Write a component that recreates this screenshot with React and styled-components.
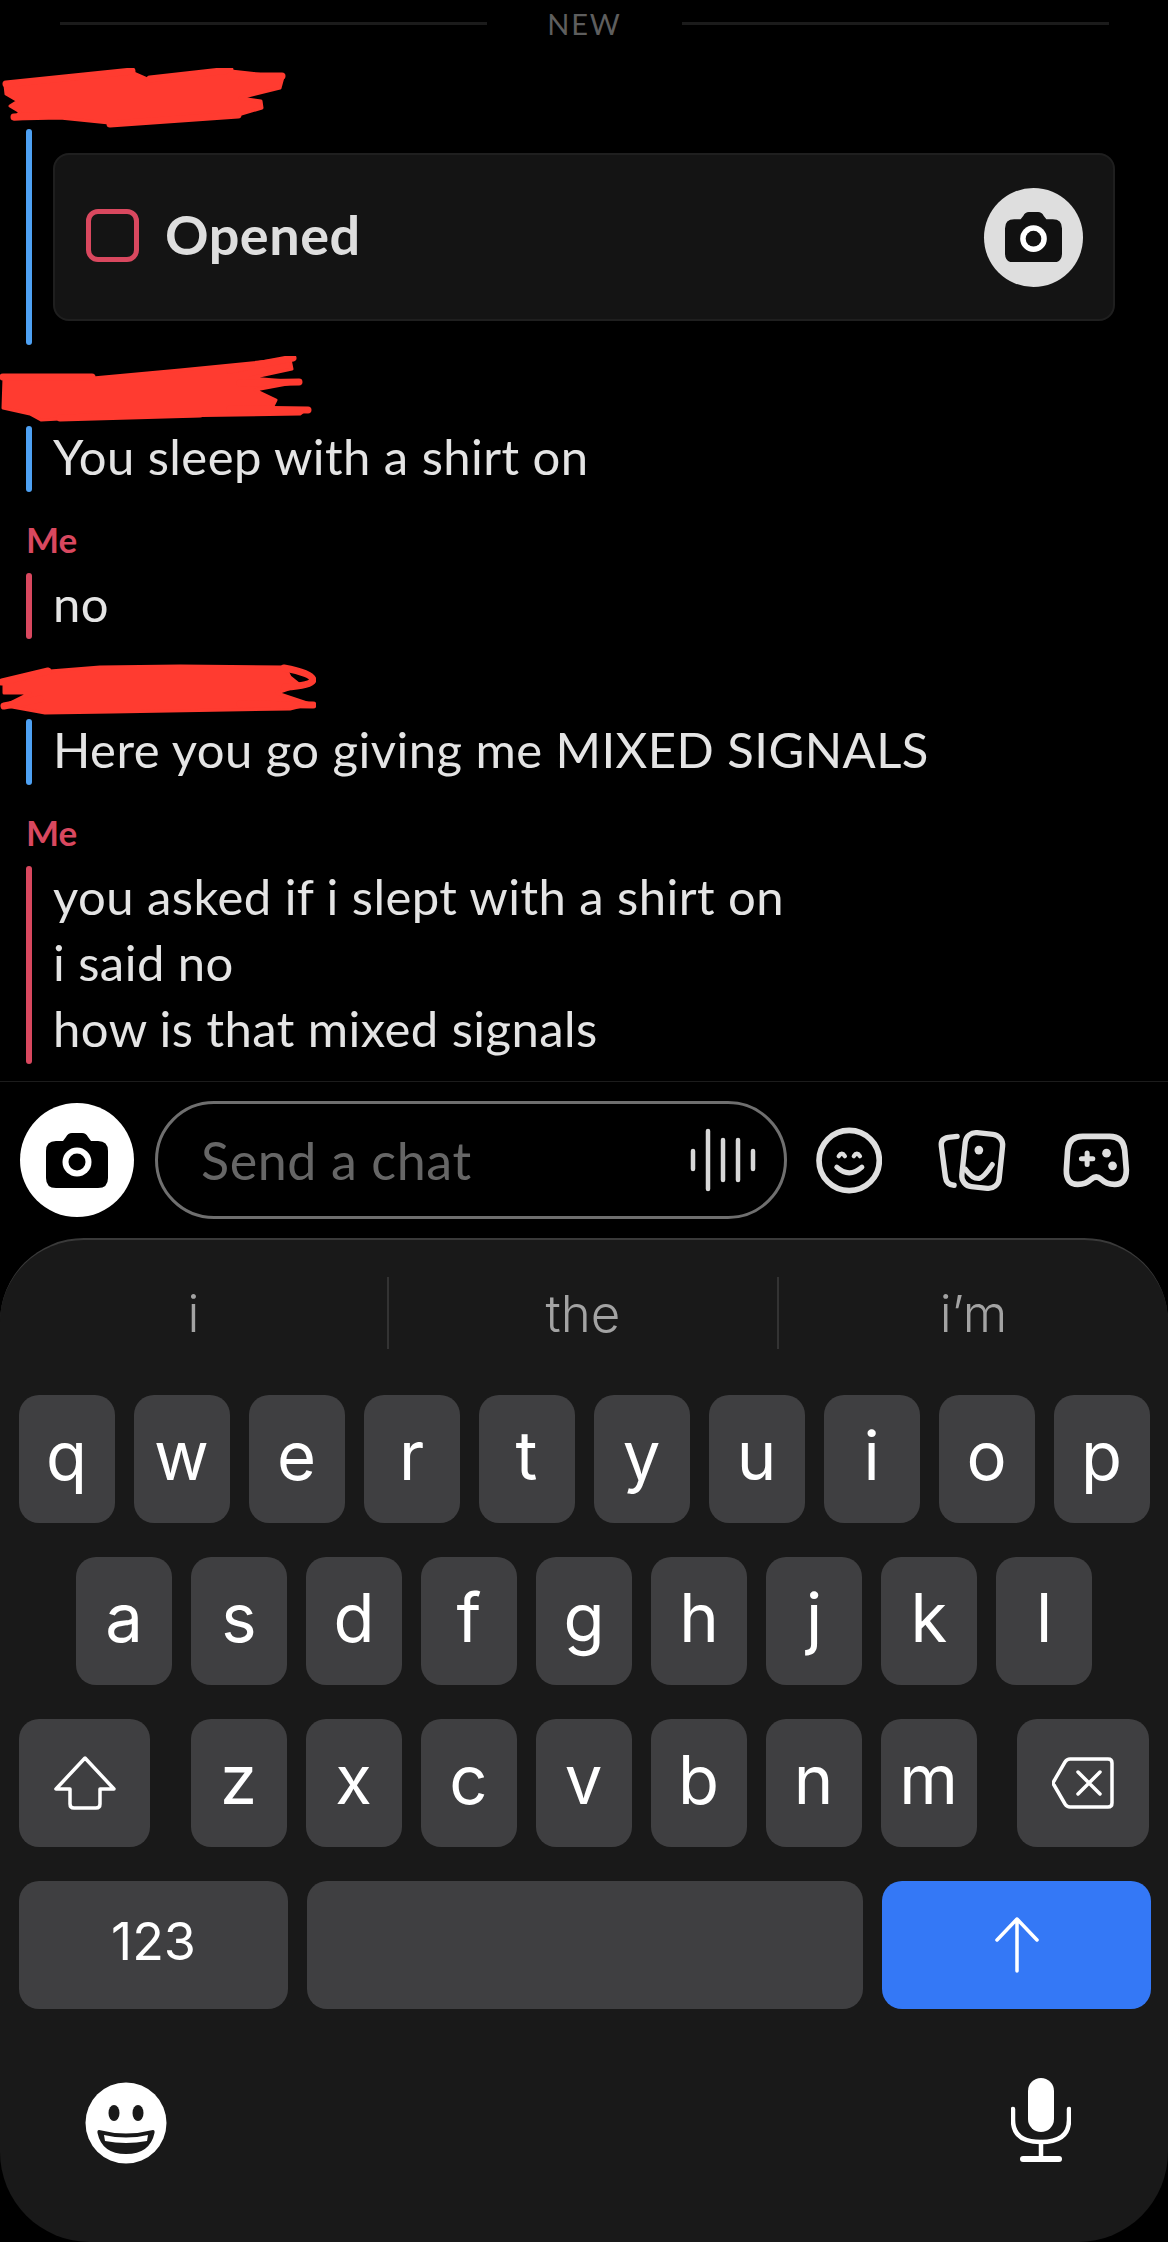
import React from "react";
import styled, { createGlobalStyle } from "styled-components";

const GlobalStyle = createGlobalStyle`
  html, body {
    margin: 0;
    padding: 0;
    background: #000;
  }
`;

const Screen = styled.div`
  width: 1168px;
  height: 2242px;
  background: #000;
  display: flex;
  flex-direction: column;
  overflow: hidden;
  font-family: Lato, "Noto Sans", sans-serif;
`;

const Chat = styled.div`
  height: 1082px;
  box-sizing: border-box;
  display: flex;
  flex-direction: column;
  align-items: flex-start;
  border-bottom: 1px solid #1c1c1c;
  flex: none;
`;

const NewDivider = styled.div`
  width: 1049px;
  height: 47px;
  margin-left: 60px;
  display: flex;
  align-items: center;
  gap: 60px;
  flex: none;
`;

const DividerLine = styled.div`
  flex: 1;
  height: 3px;
  background: #1b1b1b;
`;

const DividerText = styled.div`
  color: #5e5e5e;
  font-size: 29px;
  line-height: 47px;
  letter-spacing: 1.8px;
`;

const Scribble = styled.svg`
  display: block;
  flex: none;
  margin-top: ${(p) => p.$top}px;
  margin-bottom: ${(p) => p.$bottom}px;
`;

const Message = styled.div`
  display: flex;
  align-self: stretch;
  gap: 21px;
  margin-left: 26px;
  margin-right: 53px;
  flex: none;
`;

const Bar = styled.div`
  width: 6px;
  border-radius: 3px;
  flex: none;
  background: ${(p) => (p.$me ? "#d9485f" : "#4ea1f3")};
`;

const MessageText = styled.div`
  color: #e4e4e4;
  font-size: 49px;
  line-height: 66px;
  white-space: nowrap;
  letter-spacing: 0.45px;
  margin-top: -3px;
  padding-bottom: 3px;
`;

const MeLabel = styled.div`
  color: #d9485f;
  font-size: 35px;
  font-weight: 700;
  line-height: 40px;
  margin: 27px 0 14px 26px;
`;

const SnapCard = styled.div`
  flex: 1;
  height: 168px;
  margin: 24px 0;
  box-sizing: border-box;
  background: #141414;
  border: 2px solid #1f1f1f;
  border-radius: 16px;
  display: flex;
  align-items: center;
  padding: 0 30px 0 31px;
`;

const OpenedBox = styled.div`
  width: 53px;
  height: 53px;
  box-sizing: border-box;
  border: 5px solid #d9485f;
  border-radius: 12px;
  margin-right: 26px;
  margin-top: -4px;
`;

const OpenedText = styled.div`
  flex: 1;
  color: #dedede;
  font-size: 54px;
  font-weight: 700;
  letter-spacing: 0.5px;
  margin-top: -6px;
`;

const CameraCircle = styled.div`
  width: ${(p) => p.$size}px;
  height: ${(p) => p.$size}px;
  border-radius: 50%;
  background: ${(p) => p.$bg};
  display: flex;
  align-items: center;
  justify-content: center;
  flex: none;
`;

const Composer = styled.div`
  height: 156px;
  flex: none;
  display: flex;
  align-items: center;
  padding-left: 20px;
`;

const ChatInput = styled.div`
  width: 632px;
  height: 118px;
  box-sizing: border-box;
  margin-left: 21px;
  margin-right: 28px;
  border: 3px solid #6f6f6f;
  border-radius: 59px;
  display: flex;
  align-items: center;
  justify-content: space-between;
  padding: 0 27px 0 43px;
`;

const Placeholder = styled.div`
  color: #666;
  font-size: 52px;
  letter-spacing: 0.6px;
`;

const IconRow = styled.div`
  display: flex;
  align-items: center;
  gap: 54px;
`;

const Keyboard = styled.div`
  flex: 1;
  box-sizing: border-box;
  background: #191919;
  border-top: 2px solid #3a3a3a;
  border-radius: 84px 84px 90px 90px;
  display: flex;
  flex-direction: column;
  font-family: Inter, Roboto, sans-serif;
`;

const Suggestions = styled.div`
  display: grid;
  grid-template-columns: 387px 390px 391px;
  margin: 37px 0 46px;
  height: 72px;
`;

const Suggestion = styled.div`
  color: #a3a3a3;
  font-size: 51px;
  font-weight: 300;
  display: flex;
  align-items: center;
  justify-content: center;
  border-left: ${(p) => (p.$first ? "none" : "2px solid #333")};
`;

const KeyRow = styled.div`
  display: flex;
  justify-content: center;
  gap: 19px;
  margin-bottom: 34px;
`;

const EdgeRow = styled(KeyRow)`
  justify-content: space-between;
  padding: 0 19px;
`;

const LetterGroup = styled.div`
  display: flex;
  gap: 19px;
`;

const Key = styled.div`
  width: ${(p) => p.$width || 96}px;
  height: 128px;
  box-sizing: border-box;
  padding-bottom: ${(p) => (p.$glyph ? 0 : 8)}px;
  flex: none;
  border-radius: 20px;
  background: ${(p) => (p.$blue ? "#3478f6" : "#3f3f41")};
  color: #fff;
  font-size: ${(p) => p.$font || 67}px;
  font-weight: 400;
  display: flex;
  align-items: center;
  justify-content: center;
`;

const BottomRow = styled.div`
  display: flex;
  justify-content: space-between;
  margin-top: 35px;
  padding: 0 97px 0 84px;
`;

const CameraIcon = ({ width, dark }) => (
  <svg width={width} viewBox="0 0 62 55">
    <path
      d="M10 8h7l3-4q2-4 6-4h10q4 0 6 4l3 4h7q10 0 10 10v27q0 10-10 10H10Q0 55 0 45V18Q0 8 10 8z"
      fill={dark}
    />
    <circle cx="31" cy="29" r="14.5" fill="#fff" />
    <circle cx="31" cy="29" r="8.5" fill={dark} />
  </svg>
);

const Waveform = () => (
  <svg width="68" height="64" viewBox="0 0 68 64" stroke="#d8d8d8" strokeWidth="4.5" strokeLinecap="round">
    <line x1="4" y1="23" x2="4" y2="41" />
    <line x1="19" y1="3" x2="19" y2="61" />
    <line x1="34" y1="12" x2="34" y2="52" />
    <line x1="49" y1="12" x2="49" y2="52" />
    <line x1="64" y1="23" x2="64" y2="41" />
  </svg>
);

const SmileIcon = () => (
  <svg width="67" height="67" viewBox="105 112 200 200" fill="none" stroke="#dfdfdf" strokeLinecap="round">
    <circle cx="207" cy="212" r="90" strokeWidth="17" />
    <path d="M170 232q37 34 75 0" strokeWidth="15" />
    <path d="M176 199q9-14 18 0M221 199q9-14 18 0" strokeWidth="13" />
  </svg>
);

const CardsIcon = () => (
  <svg width="71" height="67" viewBox="470 112 212 200" fill="none" stroke="#dfdfdf" strokeLinecap="round" strokeLinejoin="round">
    <path d="M533 140l-26 3q-24 4-21 26l12 92q3 24 26 25" strokeWidth="16" />
    <rect x="552" y="131" width="112" height="162" rx="32" transform="rotate(6 608 212)" strokeWidth="16" />
    <circle cx="598" cy="181" r="13" fill="#dfdfdf" stroke="none" />
    <path d="M558 238q20 28 38 28q14 0 42-42" strokeWidth="15" />
  </svg>
);

const GameIcon = () => (
  <svg width="71" height="67" viewBox="840 112 212 200" fill="none" stroke="#dfdfdf" strokeLinecap="round" strokeLinejoin="round">
    <path d="M905 140h80q40 0 45 40l5 60q0 43-35 43-25 0-40-15-15-13-30 0-15 15-40 15-35 0-34-43l4-60q5-40 45-40z" strokeWidth="17" />
    <path d="M918 190v34M901 207h34" strokeWidth="15" />
    <circle cx="976" cy="190" r="13" fill="#dfdfdf" stroke="none" />
    <circle cx="994" cy="228" r="13" fill="#dfdfdf" stroke="none" />
  </svg>
);

const ShiftIcon = () => (
  <svg width="62" height="54" viewBox="0 0 62 54" fill="none" stroke="#fff" strokeWidth="3.5" strokeLinejoin="round">
    <path d="M31 2L2 33h14v15q0 4 4 4h22q4 0 4-4V33h14z" />
  </svg>
);

const DeleteIcon = () => (
  <svg width="62" height="52" viewBox="0 0 62 52" fill="none" stroke="#fff" strokeWidth="3.5" strokeLinejoin="round" strokeLinecap="round">
    <path d="M18 2h38q4 0 4 4v40q0 4-4 4H18q-3 0-5-3L2 28q-2-2 0-4L13 5q2-3 5-3z" />
    <path d="M26 15l22 22M48 15L26 37" />
  </svg>
);

const ReturnIcon = () => (
  <svg width="44" height="56" viewBox="0 0 44 56" fill="none" stroke="#fff" strokeWidth="3.5" strokeLinecap="round" strokeLinejoin="round">
    <path d="M22 54V2M2 23L22 2l20 21" />
  </svg>
);

const EmojiIcon = () => (
  <svg width="84" height="90" viewBox="0 0 84 90">
    <circle cx="42" cy="45" r="40.5" fill="#fff" />
    <ellipse cx="30" cy="35" rx="5.5" ry="8" fill="#191919" />
    <ellipse cx="54" cy="35" rx="5.5" ry="8" fill="#191919" />
    <path d="M15 52q27 7 54 0q2 0 1.500 3Q66 76 42 76T13.500 55q-.500-3 1.500-3z" fill="#191919" />
    <path d="M20 57q22 5 44 0l-1 6q-21 4-42 0z" fill="#fff" />
  </svg>
);

const MicIcon = () => (
  <svg width="60" height="90" viewBox="0 0 60 90" fill="none" stroke="#fff" strokeWidth="4.5" strokeLinecap="round">
    <rect x="17" y="0" width="26" height="54" rx="13" fill="#fff" stroke="none" />
    <path d="M2 31v11q0 22 28 22t28-22V31" />
    <path d="M30 64v17" />
    <path d="M12 81h36" strokeWidth="6" />
  </svg>
);

const RedMark = ({ width, height, top, bottom, points, lines }) => (
  <Scribble width={width} height={height} viewBox={`0 0 ${width} ${height}`} $top={top} $bottom={bottom}>
    <polygon points={points} fill="#ff3b30" stroke="#ff3b30" strokeWidth="3" strokeLinejoin="round" />
    {lines.map((d) => (
      <path key={d} d={d} fill="none" stroke="#ff3b30" strokeWidth="7" strokeLinecap="round" />
    ))}
  </Scribble>
);

const ROW_ONE = ["q", "w", "e", "r", "t", "y", "u", "i", "o", "p"];
const ROW_TWO = ["a", "s", "d", "f", "g", "h", "j", "k", "l"];
const ROW_THREE = ["z", "x", "c", "v", "b", "n", "m"];

export default function App() {
  return (
    <Screen>
      <GlobalStyle />
      <Chat>
        <NewDivider>
          <DividerLine />
          <DividerText>NEW</DividerText>
          <DividerLine />
        </NewDivider>

        <RedMark
          width={288}
          height={60}
          top={21}
          bottom={1}
          points="5,17 60,12 134,5 150,12 231,3 283,9 280,20 240,30 261,33 262,40 238,47 180,50 119,56 60,50 14,51 20,44 10,38 18,33 6,26"
          lines={["M6 16L132 3", "M150 11L230 2", "M230 8L282 8", "M14 49L62 46", "M110 56L238 47"]}
        />
        <Message>
          <Bar />
          <SnapCard>
            <OpenedBox />
            <OpenedText>Opened</OpenedText>
            <CameraCircle $size={99} $bg="#dedede">
              <CameraIcon width={57} dark="#111" />
            </CameraCircle>
          </SnapCard>
        </Message>

        <RedMark
          width={313}
          height={68}
          top={11}
          bottom={2}
          points="4,22 93,22 180,14 290,3 292,13 250,22 298,26 255,34 276,44 272,52 305,54 300,58 97,61 41,64 30,58 3,52"
          lines={["M3 21L92 21", "M230 14L293 2", "M240 27L299 26", "M230 53L308 54", "M60 62L200 58"]}
        />
        <Message>
          <Bar />
          <MessageText>You sleep with a shirt on</MessageText>
        </Message>

        <MeLabel>Me</MeLabel>
        <Message>
          <Bar $me />
          <MessageText>no</MessageText>
        </Message>

        <RedMark
          width={316}
          height={54}
          top={24}
          bottom={2}
          points="4,18 50,8 100,4 180,3 285,4 290,14 300,22 277,30 310,41 290,46 112,49 45,50 12,44 4,43 30,30 4,30"
          lines={["M284 5Q312 10 313 17Q312 23 285 24", "M4 43L40 36", "M2 19L48 8", "M240 41L313 42"]}
        />
        <Message>
          <Bar />
          <MessageText>Here you go giving me MIXED SIGNALS</MessageText>
        </Message>

        <MeLabel>Me</MeLabel>
        <Message>
          <Bar $me />
          <MessageText>
            you asked if i slept with a shirt on
            <br />
            i said no
            <br />
            how is that mixed signals
          </MessageText>
        </Message>
      </Chat>

      <Composer>
        <CameraCircle $size={114} $bg="#fff">
          <CameraIcon width={62} dark="#000" />
        </CameraCircle>
        <ChatInput>
          <Placeholder>Send a chat</Placeholder>
          <Waveform />
        </ChatInput>
        <IconRow>
          <SmileIcon />
          <CardsIcon />
          <GameIcon />
        </IconRow>
      </Composer>

      <Keyboard>
        <Suggestions>
          <Suggestion $first>i</Suggestion>
          <Suggestion>the</Suggestion>
          <Suggestion>i’m</Suggestion>
        </Suggestions>

        <KeyRow>
          {ROW_ONE.map((k) => (
            <Key key={k}>{k}</Key>
          ))}
        </KeyRow>
        <KeyRow>
          {ROW_TWO.map((k) => (
            <Key key={k}>{k}</Key>
          ))}
        </KeyRow>
        <EdgeRow>
          <Key $width={131} $glyph>
            <ShiftIcon />
          </Key>
          <LetterGroup>
            {ROW_THREE.map((k) => (
              <Key key={k}>{k}</Key>
            ))}
          </LetterGroup>
          <Key $width={132} $glyph>
            <DeleteIcon />
          </Key>
        </EdgeRow>
        <EdgeRow>
          <Key $width={269} $font={52}>123</Key>
          <Key $width={556} />
          <Key $width={269} $blue $glyph>
            <ReturnIcon />
          </Key>
        </EdgeRow>

        <BottomRow>
          <EmojiIcon />
          <MicIcon />
        </BottomRow>
      </Keyboard>
    </Screen>
  );
}
